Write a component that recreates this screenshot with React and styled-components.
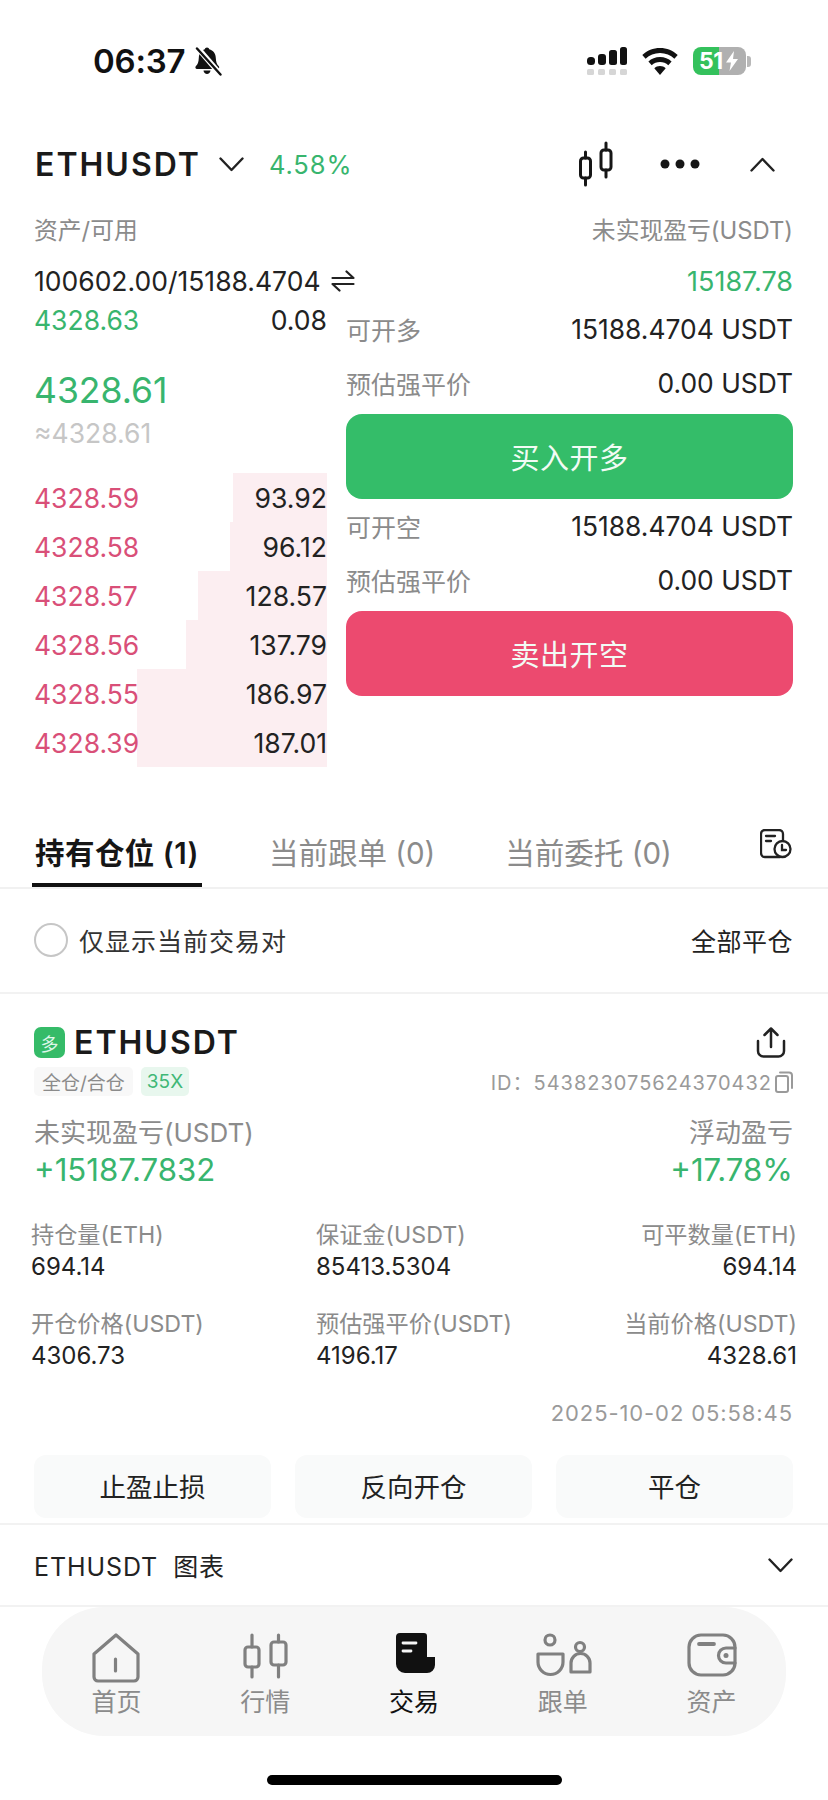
import React from "react";
import styled, { createGlobalStyle } from "styled-components";

const GREEN = "#38b56e";
const RED = "#d94f78";
const GRAY = "#8b8b8b";
const INK = "#1b1b1b";

const Global = createGlobalStyle`
  html, body { margin: 0; padding: 0; background: #fff; }
  body { font-family: Inter, "Noto Sans CJK SC", sans-serif; color: ${INK}; }
  * { box-sizing: border-box; }
`;

const Page = styled.div`
  width: 828px;
  height: 1800px;
  overflow: hidden;
  background: #fff;
`;

const StatusBar = styled.div`
  height: 122px;
  display: flex;
  align-items: center;
  padding: 0 77px 0 93px;
`;
const Clock = styled.div`
  font-size: 33px;
  font-weight: 600;
  color: #111;
  letter-spacing: -0.2px;
`;
const StatusRight = styled.div`
  margin-left: auto;
  display: flex;
  align-items: center;
`;
const Battery = styled.div`
  position: relative;
  width: 53px;
  height: 28px;
  margin-left: 15px;
  border-radius: 8px;
  background: linear-gradient(90deg, #34c15c 0 50%, #b0b0b0 50% 100%);
  color: #fff;
  font-size: 23px;
  font-weight: 700;
  line-height: 28px;
  padding-left: 6px;
  letter-spacing: -0.5px;
`;
const BatteryBolt = styled.svg`
  position: absolute;
  left: 32px;
  top: 4px;
`;
const BatteryNub = styled.div`
  width: 4px;
  height: 11px;
  margin-left: 1px;
  border-radius: 0 3px 3px 0;
  background: #b8b8b8;
`;

const Header = styled.div`
  height: 84px;
  display: flex;
  align-items: center;
  padding: 0 53px 0 35px;
`;
const Symbol = styled.div`
  font-size: 32px;
  font-weight: 600;
  letter-spacing: 2px;
  color: #1a1a1a;
`;
const HeaderChange = styled.div`
  margin-left: 25px;
  font-size: 25.5px;
  letter-spacing: 0.9px;
  color: ${GREEN};
`;
const HeaderActions = styled.div`
  margin-left: auto;
  display: flex;
  align-items: center;
`;

const SpreadRow = styled.div`
  display: flex;
  align-items: center;
  justify-content: space-between;
  height: ${(p) => p.$h}px;
  margin-top: ${(p) => p.$mt || 0}px;
  padding: 0 35px 0 34px;
`;
const MutedLabel = styled.span`
  font-size: 23.8px;
  color: ${GRAY};
`;
const ValueWithIcon = styled.span`
  display: flex;
  align-items: center;
  gap: 10px;
  font-size: 26.5px;
  color: #222;
`;
const GreenValue = styled.span`
  font-size: 27px;
  color: ${GREEN};
`;

const Trade = styled.div`
  display: flex;
  height: 465px;
  padding-left: 34px;
`;
const Book = styled.div`
  width: 293px;
  flex: none;
`;
const BookRow = styled.div`
  position: relative;
  display: flex;
  align-items: center;
  justify-content: space-between;
  height: ${(p) => p.$h || 49}px;
`;
const DepthBar = styled.div`
  position: absolute;
  top: 0;
  bottom: 0;
  right: 0;
  background: #fceef1;
`;
const BookPrice = styled.span`
  position: relative;
  font-size: 26.5px;
  color: ${(p) => (p.$up ? GREEN : RED)};
`;
const BookSize = styled.span`
  position: relative;
  font-size: 26.6px;
  color: #222;
`;
const MidPrice = styled.div`
  margin-top: 33px;
  font-size: 35.5px;
  line-height: 40px;
  color: ${GREEN};
`;
const MidFiat = styled.div`
  margin: 6px 0 24px;
  font-size: 26.5px;
  line-height: 32px;
  color: #c6c6c6;
`;

const Actions = styled.div`
  width: 447px;
  margin-left: 19px;
  padding-top: 4px;
  display: flex;
  flex-direction: column;
  gap: 4px;
`;
const ActionRow = styled.div`
  display: flex;
  align-items: center;
  justify-content: space-between;
  height: 50px;
`;
const ActionLabel = styled.span`
  font-size: 25px;
  color: ${GRAY};
  margin-top: -4px;
`;
const ActionValue = styled.span`
  font-size: 26.4px;
  color: #222;
  margin-top: -4px;
`;
const BigButton = styled.button`
  height: 85px;
  border: 0;
  border-radius: 16px;
  background: ${(p) => p.$bg};
  color: #f2fbf5;
  font: inherit;
  font-size: 29px;
  letter-spacing: 0.5px;
  padding-bottom: 3px;
`;

const Tabs = styled.div`
  height: 122px;
  display: flex;
  align-items: flex-end;
  gap: 64px;
  padding-left: 32px;
  border-bottom: 2px solid #f1f1f1;
`;
const Tab = styled.div`
  height: 69px;
  padding: 0 3px;
  display: flex;
  align-items: center;
  font-size: 29.5px;
  letter-spacing: ${(p) => (p.$active ? 0.45 : 0)}px;
  font-weight: ${(p) => (p.$active ? 600 : 400)};
  color: ${(p) => (p.$active ? "#161616" : GRAY)};
  border-bottom: 4px solid ${(p) => (p.$active ? "#111" : "transparent")};
`;
const HistoryButton = styled.div`
  margin: 0 36px 28px auto;
  height: 30px;
`;

const FilterRow = styled.div`
  height: 105px;
  display: flex;
  align-items: center;
  justify-content: space-between;
  padding: 0 35px 2px 34px;
  border-bottom: 2px solid #f2f2f2;
`;
const Radio = styled.div`
  width: 34px;
  height: 34px;
  border: 2px solid #c6c6c6;
  border-radius: 50%;
  margin-right: 11px;
`;
const FilterLeft = styled.div`
  display: flex;
  align-items: center;
  font-size: 25px;
  letter-spacing: 1px;
  color: #333;
`;
const FilterAction = styled.div`
  font-size: 25px;
  letter-spacing: 0.5px;
  color: #222;
`;

const Card = styled.div`
  padding: 33px 35px 0 34px;
`;
const TitleRow = styled.div`
  display: flex;
  align-items: center;
  height: 31px;
`;
const SideBadge = styled.div`
  width: 31px;
  height: 31px;
  border-radius: 7px;
  background: #35bb68;
  color: #dff6e8;
  font-size: 18px;
  display: flex;
  align-items: center;
  justify-content: center;
  margin-right: 9px;
`;
const ShareSlot = styled.div`
  margin-left: auto;
  margin-right: 7px;
  height: 31px;
`;
const TagRow = styled.div`
  display: flex;
  align-items: center;
  height: 29px;
  margin-top: 9px;
`;
const Tag = styled.span`
  height: 29px;
  border-radius: 5px;
  padding: 0 ${(p) => (p.$green ? 6 : 8)}px;
  margin-right: 8px;
  display: flex;
  align-items: center;
  font-size: 19px;
  background: ${(p) => (p.$green ? "#e8f7ee" : "#f8f8f8")};
  color: ${(p) => (p.$green ? "#3fb876" : GRAY)};
`;
const PositionId = styled.span`
  margin-left: auto;
  display: flex;
  align-items: center;
  font-size: 20px;
  letter-spacing: 1px;
  color: #9a9a9a;
`;
const PnlRow = styled.div`
  display: flex;
  justify-content: space-between;
  align-items: center;
  height: ${(p) => p.$h}px;
  margin-top: ${(p) => p.$mt || 0}px;
`;
const PnlLabel = styled.span`
  font-size: 26px;
  color: ${GRAY};
  margin-top: -5px;
`;
const PnlValue = styled.span`
  font-size: 31.2px;
  color: ${GREEN};
  margin-top: -2px;
`;
const Stats = styled.div`
  display: grid;
  grid-template-columns: 285px 1fr auto;
  row-gap: 27px;
  margin: 29px -4px 0 -3px;
`;
const Stat = styled.div`
  text-align: ${(p) => (p.$right ? "right" : "left")};
`;
const StatLabel = styled.div`
  font-size: 23.2px;
  line-height: 30px;
  color: ${GRAY};
`;
const StatValue = styled.div`
  font-size: 24px;
  line-height: 30px;
  margin-top: 2px;
  color: #222;
`;
const DateLine = styled.div`
  margin-top: 27px;
  text-align: right;
  font-size: 22px;
  line-height: 30px;
  letter-spacing: 0.9px;
  color: #9a9a9a;
`;
const CardButtons = styled.div`
  display: grid;
  grid-template-columns: repeat(3, 1fr);
  gap: 24px;
  margin-top: 27px;
`;
const CardButton = styled.button`
  height: 63px;
  border: 0;
  border-radius: 12px;
  background: #f9fafa;
  font: inherit;
  font-size: 26.5px;
  color: #222;
  padding-bottom: 4px;
`;
const ChartRow = styled.div`
  margin-top: 5px;
  height: 84px;
  display: flex;
  align-items: center;
  justify-content: space-between;
  padding: 0 35px 0 34px;
  border-top: 2px solid #f2f2f2;
  border-bottom: 2px solid #f2f2f2;
  font-size: 25px;
  letter-spacing: 0.9px;
  color: #222;
`;
const ChartName = styled.span`
  margin-right: 15px;
`;

const Nav = styled.nav`
  height: 129px;
  margin: 0 42px;
  padding-top: 26px;
  border-radius: 62px;
  background: #f6f6f6;
  display: grid;
  grid-template-columns: repeat(5, 1fr);
`;
const NavItem = styled.div`
  display: flex;
  flex-direction: column;
  align-items: center;
  color: ${(p) => (p.$active ? "#111" : GRAY)};
  font-size: 25px;
  line-height: 36px;
`;
const NavIcon = styled.svg`
  display: block;
  height: 50px;
  margin-bottom: 1px;
`;
const HomeBar = styled.div`
  width: 295px;
  height: 10px;
  margin: 39px auto 0;
  border-radius: 5px;
  background: #000;
`;

const Bell = () => (
  <svg width="28" height="30" viewBox="0 0 28 30" style={{ marginLeft: 9 }}>
    <path fill="#111" d="M13 1.500c1.200 0 2 .8 2.200 1.800 4 1 6.400 4.300 6.600 8.600.2 4 1 6.400 3 8.400.9 1 .3 2.700-1.200 2.700H3c-1.500 0-2.100-1.700-1.200-2.700 2-2 2.800-4.400 3-8.400.2-4.300 2.600-7.600 6-8.600.2-1 1-1.800 2.200-1.800z" />
    <path fill="#111" d="M9.500 24.500h7c-.3 2-1.700 3.500-3.500 3.500s-3.200-1.500-3.500-3.500z" />
    <path stroke="#fff" strokeWidth="5.500" d="M2 0L27 29" />
    <path stroke="#111" strokeWidth="2.400" strokeLinecap="round" d="M3 2.500L26.500 28.500" />
  </svg>
);
const Signal = () => (
  <svg width="40" height="28" viewBox="0 0 40 28">
    <rect x="0" y="10" width="8" height="8" rx="3.500" fill="#111" />
    <rect x="11" y="7" width="8" height="11" rx="3" fill="#111" />
    <rect x="22" y="3" width="8" height="15" rx="2.500" fill="#111" />
    <rect x="33" y="0" width="7" height="18" rx="2.500" fill="#111" />
    {[0, 11, 22, 33].map((x) => (
      <rect key={x} x={x} y="22" width="7" height="6" rx="1.500" fill="#d6d6d6" />
    ))}
  </svg>
);
const Wifi = () => (
  <svg width="36" height="27" viewBox="0 0 36 27" style={{ marginLeft: 15 }}>
    <path fill="#111" d="M18 0c6.800 0 13 2.600 17.700 7l-3.300 3.700C28.600 7.200 23.500 5 18 5S7.400 7.200 3.600 10.700L.300 7C5 2.600 11.200 0 18 0z" />
    <path fill="#111" d="M18 9c4.500 0 8.500 1.700 11.600 4.500l-3.300 3.700C24 15.100 21.200 14 18 14s-6 1.100-8.300 3.200l-3.300-3.700C9.500 10.700 13.500 9 18 9z" />
    <path fill="#111" d="M18 18c2.200 0 4.200.8 5.700 2.200L18 27l-5.700-6.800C13.800 18.800 15.800 18 18 18z" />
  </svg>
);
const Chevron = ({ up, w = 25, h = 15, color = "#222", style }) => (
  <svg width={w} height={h} viewBox="0 0 25 15" style={style}>
    <path d={up ? "M1.500 13.500L12.500 2l11 11.500" : "M1.500 1.500L12.500 13l11-11.500"} fill="none" stroke={color} strokeWidth="2.400" strokeLinecap="round" strokeLinejoin="round" />
  </svg>
);
const CandleIcon = () => (
  <svg width="36" height="46" viewBox="0 0 36 46" fill="none" stroke="#161616" strokeWidth="3" strokeLinecap="round">
    <rect x="2.500" y="17" width="10" height="20" rx="3" />
    <path d="M7.500 11v6M7.500 37v7" />
    <rect x="23" y="9" width="10" height="20" rx="3" />
    <path d="M28 2v7M28 29v7" />
  </svg>
);
const Dots = () => (
  <svg width="40" height="10" viewBox="0 0 40 10" style={{ marginLeft: 46 }} fill="#161616">
    <circle cx="5" cy="5" r="4.500" />
    <circle cx="20" cy="5" r="4.500" />
    <circle cx="35" cy="5" r="4.500" />
  </svg>
);
const SwapIcon = () => (
  <svg width="24" height="22" viewBox="0 0 24 22" fill="none" stroke="#222" strokeWidth="2.200" strokeLinecap="round" strokeLinejoin="round">
    <path d="M1.500 8H22.500L15.500 1.500" />
    <path d="M22.500 14H1.500L8.500 20.500" />
  </svg>
);
const HistoryIcon = () => (
  <svg width="32" height="30" viewBox="0 0 32 30" fill="none" stroke="#222" strokeWidth="2.300" strokeLinecap="round">
    <path d="M20 28H5a4 4 0 0 1-4-4V5a4 4 0 0 1 4-4h14a4 4 0 0 1 4 4v7" />
    <path d="M6 7h9M6 12h5" />
    <circle cx="22.500" cy="20" r="8" />
    <path d="M22 16v5h4" />
  </svg>
);
const ShareIcon = () => (
  <svg width="30" height="31" viewBox="0 0 30 31" fill="none" stroke="#222" strokeWidth="2.500" strokeLinecap="round" strokeLinejoin="round">
    <path d="M15 20V2M8.500 8L15 1.500 21.500 8" />
    <path d="M2 14v10a5.500 5.500 0 0 0 5.500 5.500h15A5.500 5.500 0 0 0 28 24V14" />
  </svg>
);
const CopyIcon = () => (
  <svg width="18" height="22" viewBox="0 0 18 22" fill="none" stroke="#9a9a9a" strokeWidth="2" style={{ marginLeft: 3 }}>
    <rect x="1" y="5" width="12" height="16" rx="2" />
    <path d="M5 1.500h9a3 3 0 0 1 3 3V17" strokeLinecap="round" />
  </svg>
);

const navStroke = { fill: "none", stroke: "#808080", strokeWidth: 3.2, strokeLinecap: "round", strokeLinejoin: "round" };
const HomeGlyph = () => (
  <NavIcon width="48" viewBox="0 0 48 50" {...navStroke}>
    <path d="M24 2L46 21V44a4 4 0 0 1-4 4H6a4 4 0 0 1-4-4V21Z" />
    <path d="M23.500 26V38" />
  </NavIcon>
);
const MarketGlyph = () => (
  <NavIcon width="50" viewBox="0 0 50 50" {...navStroke}>
    <rect x="5" y="14" width="14" height="20" rx="3" />
    <path d="M12 2v12M12 34v10" />
    <rect x="31" y="9" width="15" height="23" rx="3" />
    <path d="M38.500 2v7M38.500 32v12" />
  </NavIcon>
);
const TradeGlyph = () => (
  <NavIcon width="48" viewBox="0 0 48 50">
    <path fill="#111" d="M10 0H34a3 3 0 0 1 3 3V24H45V32a8 8 0 0 1-8 8H15a9 9 0 0 1-9-9V4a4 4 0 0 1 4-4Z" />
    <path stroke="#f6f6f6" strokeWidth="2.800" strokeLinecap="round" d="M13 10H26M13 18H21" />
  </NavIcon>
);
const FollowGlyph = () => (
  <NavIcon width="60" viewBox="0 0 60 50" {...navStroke}>
    <circle cx="17" cy="7" r="5" />
    <path d="M5 21H30V29a12.500 12.500 0 0 1-25 0Z" />
    <circle cx="47" cy="14" r="4.500" />
    <path d="M38 39V30a9.500 9.500 0 0 1 19 0V39Z" />
  </NavIcon>
);
const WalletGlyph = () => (
  <NavIcon width="50" viewBox="0 0 50 50" {...navStroke}>
    <rect x="2" y="2" width="46" height="40" rx="12" />
    <path d="M12 11H27" strokeWidth="3.800" />
    <path d="M48 15H39a7.500 7.500 0 0 0 0 15H48" />
    <circle cx="39" cy="22.500" r="2.500" fill="#808080" stroke="none" />
  </NavIcon>
);

const asks = [
  ["4328.59", "93.92", 94],
  ["4328.58", "96.12", 97],
  ["4328.57", "128.57", 129],
  ["4328.56", "137.79", 141],
  ["4328.55", "186.97", 190],
  ["4328.39", "187.01", 190],
];

const stats = [
  ["持仓量(ETH)", "694.14"],
  ["保证金(USDT)", "85413.5304"],
  ["可平数量(ETH)", "694.14", true],
  ["开仓价格(USDT)", "4306.73"],
  ["预估强平价(USDT)", "4196.17"],
  ["当前价格(USDT)", "4328.61", true],
];

const navItems = [
  ["首页", HomeGlyph],
  ["行情", MarketGlyph],
  ["交易", TradeGlyph, true],
  ["跟单", FollowGlyph],
  ["资产", WalletGlyph],
];

export default function App() {
  return (
    <Page>
      <Global />
      <StatusBar>
        <Clock>06:37</Clock>
        <Bell />
        <StatusRight>
          <Signal />
          <Wifi />
          <Battery>
            51
            <BatteryBolt width="14" height="20" viewBox="0 0 14 20">
              <path fill="#fff" d="M9 0L1 11.500H6L4.500 20 13 8H8Z" />
            </BatteryBolt>
          </Battery>
          <BatteryNub />
        </StatusRight>
      </StatusBar>

      <Header>
        <Symbol>ETHUSDT</Symbol>
        <Chevron style={{ marginLeft: 18 }} />
        <HeaderChange>4.58%</HeaderChange>
        <HeaderActions>
          <CandleIcon />
          <Dots />
          <Chevron up style={{ marginLeft: 50 }} />
        </HeaderActions>
      </Header>

      <SpreadRow $h={44}>
        <MutedLabel>资产/可用</MutedLabel>
        <MutedLabel>未实现盈亏(USDT)</MutedLabel>
      </SpreadRow>
      <SpreadRow $h={42} $mt={10}>
        <ValueWithIcon>
          100602.00/15188.4704
          <SwapIcon />
        </ValueWithIcon>
        <GreenValue>15187.78</GreenValue>
      </SpreadRow>

      <Trade>
        <Book>
          <BookRow $h={36}>
            <BookPrice $up>4328.63</BookPrice>
            <BookSize>0.08</BookSize>
          </BookRow>
          <MidPrice>4328.61</MidPrice>
          <MidFiat>≈4328.61</MidFiat>
          {asks.map(([price, size, depth]) => (
            <BookRow key={price}>
              <DepthBar style={{ width: depth }} />
              <BookPrice>{price}</BookPrice>
              <BookSize>{size}</BookSize>
            </BookRow>
          ))}
        </Book>
        <Actions>
          <ActionRow>
            <ActionLabel>可开多</ActionLabel>
            <ActionValue>15188.4704 USDT</ActionValue>
          </ActionRow>
          <ActionRow>
            <ActionLabel>预估强平价</ActionLabel>
            <ActionValue>0.00 USDT</ActionValue>
          </ActionRow>
          <BigButton $bg="#34bd69">买入开多</BigButton>
          <ActionRow>
            <ActionLabel>可开空</ActionLabel>
            <ActionValue>15188.4704 USDT</ActionValue>
          </ActionRow>
          <ActionRow>
            <ActionLabel>预估强平价</ActionLabel>
            <ActionValue>0.00 USDT</ActionValue>
          </ActionRow>
          <BigButton $bg="#ec4a6f">卖出开空</BigButton>
        </Actions>
      </Trade>

      <Tabs>
        <Tab $active>持有仓位 (1)</Tab>
        <Tab>当前跟单 (0)</Tab>
        <Tab>当前委托 (0)</Tab>
        <HistoryButton>
          <HistoryIcon />
        </HistoryButton>
      </Tabs>

      <FilterRow>
        <FilterLeft>
          <Radio />
          仅显示当前交易对
        </FilterLeft>
        <FilterAction>全部平仓</FilterAction>
      </FilterRow>

      <Card>
        <TitleRow>
          <SideBadge>多</SideBadge>
          <Symbol>ETHUSDT</Symbol>
          <ShareSlot>
            <ShareIcon />
          </ShareSlot>
        </TitleRow>
        <TagRow>
          <Tag>全仓/合仓</Tag>
          <Tag $green>35X</Tag>
          <PositionId>
            ID：543823075624370432
            <CopyIcon />
          </PositionId>
        </TagRow>
        <PnlRow $h={34} $mt={20}>
          <PnlLabel>未实现盈亏(USDT)</PnlLabel>
          <PnlLabel>浮动盈亏</PnlLabel>
        </PnlRow>
        <PnlRow $h={40} $mt={1}>
          <PnlValue>+15187.7832</PnlValue>
          <PnlValue>+17.78%</PnlValue>
        </PnlRow>
        <Stats>
          {stats.map(([label, value, right]) => (
            <Stat key={label} $right={right}>
              <StatLabel>{label}</StatLabel>
              <StatValue>{value}</StatValue>
            </Stat>
          ))}
        </Stats>
        <DateLine>2025-10-02 05:58:45</DateLine>
        <CardButtons>
          <CardButton>止盈止损</CardButton>
          <CardButton>反向开仓</CardButton>
          <CardButton>平仓</CardButton>
        </CardButtons>
      </Card>

      <ChartRow>
        <span>
          <ChartName>ETHUSDT</ChartName>图表
        </span>
        <Chevron />
      </ChartRow>

      <Nav>
        {navItems.map(([label, Glyph, active]) => (
          <NavItem key={label} $active={active}>
            <Glyph />
            {label}
          </NavItem>
        ))}
      </Nav>
      <HomeBar />
    </Page>
  );
}
